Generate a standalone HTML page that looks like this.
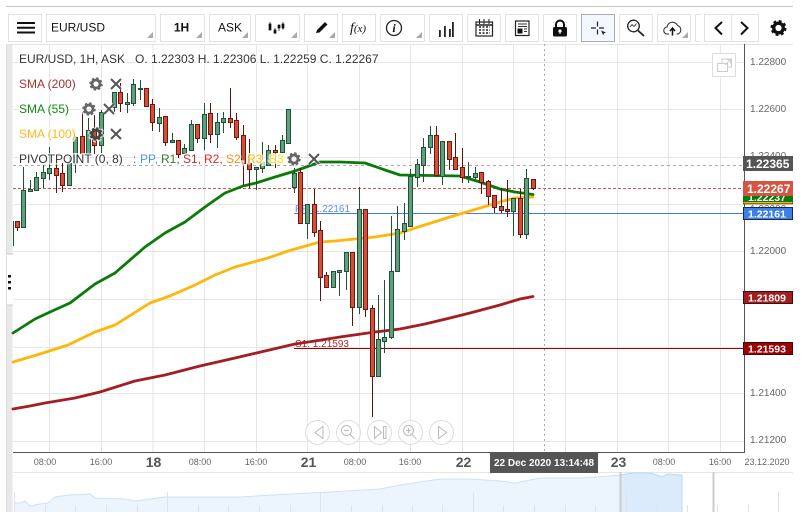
<!DOCTYPE html>
<html><head><meta charset="utf-8"><style>
html,body{margin:0;padding:0;background:#fff;width:812px;height:523px;overflow:hidden}
svg{display:block;font-family:"Liberation Sans",sans-serif}
.btn{fill:#fff;stroke:#e2e2e2}
.tri{fill:#aaa}
.ax{font-size:10px;fill:#666}
.tm{font-size:9px;fill:#666;text-anchor:middle}
.dy{font-size:14px;font-weight:bold;fill:#555;text-anchor:middle}
.lg{font-size:12px;paint-order:stroke;stroke:#fff;stroke-width:3px;stroke-opacity:.75}
.tag{fill:#fff;font-size:10.5px;font-weight:bold}
.nv{fill:#fff;fill-opacity:.6;stroke:#ddd}
.ni{fill:none;stroke:#bbb}
</style></head><body>
<svg width="812" height="523" viewBox="0 0 812 523" xmlns="http://www.w3.org/2000/svg">
<defs>
<g id="gear"><circle r="4" fill="none" stroke="currentColor" stroke-width="2.8"/><circle r="5.6" fill="none" stroke="currentColor" stroke-width="2.2" stroke-dasharray="2.3 2.1"/></g>
<g id="x"><path d="M-5-5L5 5M5-5L-5 5" stroke="#fff" stroke-width="4" stroke-opacity=".6" fill="none"/><path d="M-5-5L5 5M5-5L-5 5" stroke="#555" stroke-width="2" fill="none"/></g>
</defs>
<rect width="812" height="523" fill="#fff"/>
<rect x="6" y="6" width="787" height="1" fill="#c4c4c4"/>
<!-- left rail -->
<rect x="6" y="44" width="1" height="468" fill="#ddd"/>
<rect x="7" y="44" width="5.5" height="468" fill="#e8e8e8"/>
<rect x="7" y="254" width="5.5" height="51" fill="#fff"/>
<path d="M7 254h6M7 305h6" stroke="#ccc"/>
<path d="M8 275h3v2.500h-3zM8 281h3v2.500h-3zM8 287h3v2.500h-3z" fill="#111"/>
<!-- grid -->
<path d="M13 62.500H744M13 109.500H744M13 157.500H744M13 204.500H744M13 251.500H744M13 299.500H744M13 347.500H744M13 393.500H744M13 441.500H744M49.500 44V452M101.500 44V452M153 44V452M204.500 44V452M256.500 44V452M307.500 44V452M359.500 44V452M410.500 44V452M462.500 44V452M513.500 44V452M565.500 44V452M617.500 44V452M668.500 44V452M720.500 44V452" stroke="#e6e6e6" fill="none"/>
<rect x="6" y="44" width="787" height="1" fill="#e4e4e4"/>
<path d="M544.500 44V452" stroke="#aaa" stroke-dasharray="2 3" fill="none"/>
<path d="M13 165.500H744" stroke="#aaa" stroke-dasharray="3 3" fill="none"/>
<path d="M13 188.500H744" stroke="#d9503f" stroke-dasharray="3 2" fill="none"/>
<path d="M294 213.500H744" stroke="#3f7fdc" fill="none"/>
<path d="M294 348.500H744" stroke="#a00000" fill="none"/>
<text x="295" y="212" font-size="10" fill="#5a93e6">PP: 1.22161</text>
<text x="295" y="347" font-size="10" fill="#b02525">S1: 1.21593</text>
<!-- moving averages -->
<g fill="none" stroke-width="2.800" stroke-linejoin="round" stroke-linecap="round">
<path stroke="#a31d22" d="M13 409L30 406L45 403L75 398L100 392L135 381L165 375L200 366L235 358L265 351L295 344L315 341L340 337L375 332L400 329L425 324L450 318L470 313L500 305L520 299L533 296.500"/>
<path stroke="#ffb60a" d="M13 362L40 354L68 345L95 332L115 325L150 303L170 296L195 285L215 275L235 267L268 258L288 251L320 242L335 241L375 237L400 233L415 228L450 217L480 208L500 202L515 198L533 197"/>
<path stroke="#0b7a0b" d="M13 333L35 319L50 312L70 303L95 284L115 273L145 247L165 233L185 222L205 207L225 193L243 186L256 183L275 177L295 171L320 162L340 162L365 163L385 170L400 175L460 176L480 182L500 189L515 192L533 194.500"/>
</g>
<!-- candles: wicks -->
<path fill="none" stroke="#1e5236" d="M13.500 221V246M23.500 167V227M30.500 180V191M36.500 172V190M43.500 165V188M49.500 147V180M69.500 157V185M75.500 136V173M88.500 118V153M101.500 110V153M114.500 92V112M127.500 93V113M133.500 79V106M140.500 80V100M159.500 108V132M172.500 133V142M184.500 144V153M191.500 120V150M204.500 103V150M217.500 113V148M223.500 112V133M256.500 168V190M262.500 142V173M268.500 145V165M282.500 135V152M288.500 109V143M294.500 168V193M307.500 204V239M333.500 271V287M339.500 270V296M346.500 252V290M359.500 187V314M378.500 295V376M384.500 280V353M391.500 216V339M397.500 206V271M404.500 203V240M410.500 169V227M417.500 159V187M423.500 138V182M430.500 126V154M442.500 141V185M468.500 162V183M475.500 167V180M513.500 198V236M526.500 169V239"/>
<path fill="none" stroke="#5e1208" d="M17.500 221V231M56.500 160V193M62.500 163V192M82.500 112V158M94.500 115V154M120.500 83V112M146.500 88V107M152.500 99V131M165.500 116V146M178.500 140V158M197.500 124V143M210.500 103V143M230.500 88V128M236.500 113V140M243.500 125V185M249.500 139V188M275.500 145V168M300.500 168V223M314.500 189V237M320.500 221V301M326.500 272V287M352.500 252V326M365.500 209V317M372.500 305V417M436.500 126V177M449.500 141V170M455.500 133V170M462.500 148V183M481.500 172V194M488.500 180V205M494.500 195V213M501.500 188V213M507.500 180V217M520.500 189V238M533.500 179V190"/>
<!-- candles: bodies -->
<g transform="translate(0 .5)">
<path fill="#5f9f7b" stroke="#1e5236" d="M21.500 190h4V227h-4zM28.500 189h4V191h-4zM34.500 177h4V190h-4zM41.500 172h4V178h-4zM47.500 168h4V173h-4zM67.500 163h4V185h-4zM73.500 137h4V163h-4zM86.500 130h4V153h-4zM99.500 112h4V145h-4zM112.500 92h4V107h-4zM125.500 102h4V104h-4zM131.500 84h4V103h-4zM138.500 88h4V89h-4zM157.500 117h4V123h-4zM170.500 140h4V142h-4zM182.500 148h4V153h-4zM189.500 124h4V150h-4zM202.500 114h4V138h-4zM215.500 122h4V134h-4zM221.500 118h4V122h-4zM254.500 167h4V169h-4zM260.500 163h4V168h-4zM266.500 150h4V165h-4zM280.500 140h4V152h-4zM286.500 109h4V143h-4zM292.500 173h4V187h-4zM305.500 204h4V223h-4zM331.500 271h4V287h-4zM337.500 270h4V272h-4zM344.500 252h4V271h-4zM357.500 209h4V307h-4zM376.500 339h4V376h-4zM382.500 337h4V341h-4zM389.500 271h4V337h-4zM395.500 229h4V271h-4zM402.500 223h4V231h-4zM408.500 176h4V226h-4zM415.500 164h4V177h-4zM421.500 147h4V165h-4zM428.500 135h4V147h-4zM440.500 141h4V176h-4zM466.500 176h4V177h-4zM473.500 173h4V177h-4zM511.500 198h4V211h-4zM524.500 178h4V234h-4z"/>
<path fill="#d44e38" stroke="#6a1810" d="M15.500 221h4V227h-4zM54.500 168h4V175h-4zM60.500 173h4V185h-4zM80.500 136h4V153h-4zM92.500 130h4V145h-4zM118.500 92h4V103h-4zM144.500 88h4V106h-4zM150.500 104h4V122h-4zM163.500 116h4V142h-4zM176.500 140h4V154h-4zM195.500 124h4V138h-4zM208.500 113h4V134h-4zM228.500 118h4V122h-4zM234.500 120h4V137h-4zM241.500 135h4V163h-4zM247.500 163h4V169h-4zM273.500 150h4V152h-4zM298.500 172h4V223h-4zM312.500 204h4V232h-4zM318.500 230h4V277h-4zM324.500 275h4V287h-4zM350.500 252h4V307h-4zM363.500 209h4V309h-4zM370.500 308h4V376h-4zM434.500 135h4V175h-4zM447.500 141h4V159h-4zM453.500 157h4V169h-4zM460.500 167h4V177h-4zM479.500 172h4V182h-4zM486.500 181h4V196h-4zM492.500 195h4V207h-4zM499.500 206h4V210h-4zM505.500 209h4V211h-4zM518.500 198h4V234h-4zM531.500 179h4V188h-4z"/>
</g>
<!-- legend -->
<text x="19" y="63" class="lg" fill="#333">EUR/USD, 1H, ASK</text>
<text x="135" y="63" class="lg" fill="#333">O. 1.22303 H. 1.22306 L. 1.22259 C. 1.22267</text>
<text x="19" y="88" class="lg" fill="#a83232">SMA (200)</text>
<text x="19" y="113" class="lg" fill="#118811">SMA (55)</text>
<text x="19" y="138" class="lg" fill="#ffb81c">SMA (100)</text>
<text x="19" y="163" class="lg" fill="#333">PIVOTPOINT (0, 8)</text>
<text x="133" y="163" class="lg" fill="#666">:</text>
<text x="140" y="163" class="lg" fill="#4a90f0">PP,</text>
<text x="161" y="163" class="lg" fill="#2e7d2e">R1,</text>
<text x="183" y="163" class="lg" fill="#c12e2e">S1,</text>
<text x="204" y="163" class="lg" fill="#ee2222">R2,</text>
<text x="226" y="163" class="lg" fill="#ff8c1a">S2,</text>
<text x="247" y="163" class="lg" fill="#ffb400">R3,</text>
<text x="269" y="163" class="lg" fill="#f5e800">S3</text>
<g color="#fff" opacity=".6" transform="translate(96 84) scale(1.250)"><use href="#gear"/></g>
<g color="#666" transform="translate(96 84)"><use href="#gear"/></g>
<use href="#x" x="116" y="84"/>
<g color="#fff" opacity=".6" transform="translate(89 109) scale(1.250)"><use href="#gear"/></g>
<g color="#666" transform="translate(89 109)"><use href="#gear"/></g>
<use href="#x" x="109" y="109"/>
<g color="#fff" opacity=".7" transform="translate(96 134) scale(1.250)"><use href="#gear"/></g>
<g color="#444" transform="translate(96 134)"><use href="#gear"/></g>
<use href="#x" x="116" y="134"/>
<g color="#fff" opacity=".6" transform="translate(294 159) scale(1.250)"><use href="#gear"/></g>
<g color="#666" transform="translate(294 159)"><use href="#gear"/></g>
<use href="#x" x="314" y="159"/>
<!-- popout -->
<rect x="712.500" y="53.500" width="23" height="23" fill="#fff" stroke="#ddd"/>
<path d="M717.500 63.500h10v8h-10zM722 63.500v-4.500h9.500v8h-4" fill="none" stroke="#ccc"/>
<path d="M725 65l5-5M726.500 59.500h4v4" fill="none" stroke="#ccc"/>
<!-- chart nav buttons -->
<g class="nv"><circle cx="317.500" cy="432.500" r="12"/><circle cx="348.500" cy="432.500" r="12"/><circle cx="379.500" cy="432.500" r="12"/><circle cx="410.500" cy="432.500" r="12"/><circle cx="441.500" cy="432.500" r="12"/></g>
<g class="ni">
<path d="M323 426.500v12l-8-6z"/>
<circle cx="346.500" cy="430.500" r="5"/><path d="M344 430.500h5M350 434.500l4.500 4.500"/>
<path d="M374.500 426.500v12l7-6zM383.500 426.500h2.500v12h-2.500z"/>
<circle cx="408.500" cy="430.500" r="5"/><path d="M406 430.500h5M408.500 428v5M412 434.500l4.500 4.500"/>
<path d="M438.500 426.500v12l8-6z"/>
</g>
<!-- axis -->
<rect x="744" y="44" width="1" height="409" fill="#555"/>
<rect x="13" y="452" width="732" height="1" fill="#555"/>
<g class="ax">
<text x="750" y="65">1.22800</text>
<text x="750" y="112">1.22600</text>
<text x="750" y="159">1.22400</text>
<text x="750" y="212">1.22200</text>
<text x="750" y="254">1.22000</text>
<text x="750" y="396">1.21400</text>
<text x="750" y="443">1.21200</text>
</g>
<!-- price tags -->
<rect x="743" y="156" width="50" height="15" fill="#555"/>
<text x="746" y="168" fill="#fff" font-size="12" font-weight="bold">1.22365</text>
<rect x="743" y="196" width="50" height="8" fill="#0b7a0b"/>
<text x="748" y="201" class="tag">1.22237</text>
<rect x="743.500" y="202" width="49" height="1.500" fill="#ffb60a"/>
<rect x="743" y="203.500" width="50" height=".8" fill="#222"/>
<rect x="743" y="181" width="50" height="15" fill="#d55542"/>
<text x="747" y="193" fill="#fff" font-size="12" font-weight="bold">1.22267</text>
<rect x="743.500" y="207.500" width="49" height="12" fill="#3a80e8" stroke="#1a2a40"/>
<text x="748" y="217.500" class="tag">1.22161</text>
<rect x="743.500" y="291.500" width="49" height="12" fill="#a31d1d" stroke="#3a1010"/>
<text x="748" y="301.500" class="tag">1.21809</text>
<rect x="743.500" y="342.500" width="49" height="12" fill="#a00000" stroke="#301010"/>
<text x="748" y="352.500" class="tag">1.21593</text>
<!-- time axis -->
<g class="tm">
<text x="45" y="465">08:00</text><text x="101" y="465">16:00</text>
<text x="200" y="465">08:00</text><text x="256" y="465">16:00</text>
<text x="355" y="465">08:00</text><text x="410" y="465">16:00</text>
<text x="664" y="465">08:00</text><text x="720" y="465">16:00</text>
<text x="767" y="465">23.12.2020</text>
</g>
<g class="dy">
<text x="153.500" y="467">18</text><text x="308.500" y="467">21</text><text x="463.500" y="467">22</text><text x="618.500" y="467">23</text>
</g>
<rect x="490" y="452" width="108" height="21" fill="#555"/>
<text x="544" y="466" fill="#fff" font-size="10" font-weight="bold" text-anchor="middle">22 Dec 2020 13:14:48</text>
<!-- navigator -->
<rect x="13" y="472" width="780" height="1" fill="#e6e6e6"/>
<rect x="490" y="472" width="108" height="1" fill="#555"/>
<path fill="#ecf4fd" stroke="none" d="M14 503L20 503L25 501L30 506L40 504L48 503L55 497L70 495L90 494L95 498L125 499L135 501L165 497L200 497L240 497L290 494L330 492L380 489L400 485L420 482L440 479L470 479L500 481L515 483L540 478L580 478L610 476L620 475V512H14Z"/>
<path fill="#dcebfc" d="M620 475L632 473L650 473L660 476L662 477L668 474L680 475L682 475V512H620Z"/>
<path fill="none" stroke="#cfe1f8" d="M14 503L20 503L25 501L30 506L40 504L48 503L55 497L70 495L90 494L95 498L125 499L135 501L165 497L200 497L240 497L290 494L330 492L380 489L400 485L420 482L440 479L470 479L500 481L515 483L540 478L580 478L610 476L620 475"/>
<path fill="none" stroke="#bcd8f8" d="M620 475L632 473L650 473L660 476L662 477L668 474L680 475L682 475V512"/>
<path fill="none" stroke="#dfe3e8" d="M45.500 505V512M75.500 505V512M106.500 505V512M137.500 505V512M198.500 505V512M228.500 505V512M259.500 505V512M290.500 505V512M351.500 505V512M382.500 505V512M412.500 505V512M442.500 505V512M503.500 505V512M534.500 505V512M565.500 505V512M595.500 505V512M657.500 505V512M687.500 505V512M717.500 505V512M748.500 505V512M14.500 492V512M167.500 492V512M320.500 492V512M473.500 492V512M626.500 492V512M778.500 492V512"/>
<rect x="619.500" y="472" width="2" height="40" fill="#ccc"/>
<rect x="712.500" y="472" width="2" height="40" fill="#ccc"/>
<!-- toolbar -->
<g class="btn">
<rect x="8.500" y="14.500" width="33" height="27"/>
<rect x="46.500" y="14.500" width="109" height="27"/>
<rect x="160.500" y="14.500" width="44" height="27"/>
<rect x="209.500" y="14.500" width="41" height="27"/>
<rect x="255.500" y="14.500" width="44" height="27"/>
<rect x="304.500" y="14.500" width="33" height="27"/>
<rect x="342.500" y="14.500" width="33" height="27"/>
<rect x="380.500" y="14.500" width="44" height="27"/>
<rect x="429.500" y="14.500" width="33" height="27"/>
<rect x="467.500" y="14.500" width="33" height="27"/>
<rect x="505.500" y="14.500" width="33" height="27"/>
<rect x="543.500" y="14.500" width="33" height="27"/>
<rect x="581.500" y="14.500" width="33" height="27" style="fill:#f4f8fe;stroke:#a9aebb"/>
<rect x="619.500" y="14.500" width="33" height="27"/>
<rect x="657.500" y="14.500" width="33" height="27"/>
<path d="M701 14.500h-5.500v27h5.500" fill="none"/>
<rect x="704.500" y="14.500" width="27" height="27"/>
<rect x="731.500" y="14.500" width="27" height="27"/>
</g>
<path class="tri" d="M153 32v6h-6zM202 32v6h-6zM248 32v6h-6zM297 32v6h-6zM335 32v6h-6zM422 32v6h-6zM688 32v6h-6z"/>
<path d="M17 22h18v2h-18zM17 26.800h18v2h-18zM17 31.500h18v2h-18z" fill="#111"/>
<text x="51" y="31.500" font-size="12" fill="#111">EUR/USD</text>
<text x="181.500" y="31.500" font-size="12" font-weight="bold" fill="#111" text-anchor="middle">1H</text>
<text x="230" y="31.500" font-size="12" fill="#111" text-anchor="middle">ASK</text>
<path d="M270 22v6.500M269 24h2v6h-2zM275 28v6M274 30h2v3h-2zM279 25v6M278 25h2v3h-2zM283 22v8M282 24h2v4h-2z" stroke="#111" stroke-width=".7" fill="#111"/>
<path d="M316 33l1-3 8-8 2.500 2.500-8 8z" fill="#111"/>
<text x="350" y="32" font-family="Liberation Serif" font-style="italic" font-size="14" fill="#111">f<tspan font-size="11">(x)</tspan></text>
<circle cx="394" cy="28" r="7.500" fill="none" stroke="#222" stroke-width="1.300"/>
<text x="394" y="32" font-family="Liberation Serif" font-style="italic" font-weight="bold" font-size="12" fill="#111" text-anchor="middle">i</text>
<path d="M439 30h1.800v7h-1.800zM444 26h1.800v11h-1.800zM449 29h1.800v8h-1.800zM452 22h1.800v15h-1.800z" fill="#222"/>
<rect x="476" y="22" width="16.500" height="14" fill="#fff" stroke="#222" stroke-width="1.200"/>
<path d="M476 25h16.500" stroke="#222" stroke-width="1.500"/>
<path d="M479.500 19v5M484 19v5M489 19v5" stroke="#222"/>
<path d="M479 27h11M479 30h11M479 33h11" stroke="#222" stroke-width="1.500" stroke-dasharray="2 1.500"/>
<rect x="515.500" y="21" width="13.500" height="14.500" fill="#fff" stroke="#222" stroke-width="1.200"/>
<path d="M518 24h9M518 26.500h9M524 29h3M524 31.500h3" stroke="#333"/>
<rect x="517.500" y="28.500" width="5" height="5" fill="#111"/>
<path d="M556 28v-3.500a4 4 0 0 1 8 0V28" fill="none" stroke="#111" stroke-width="2"/>
<rect x="553" y="27" width="14" height="9.500" rx="1.500" fill="#111"/>
<circle cx="560" cy="31" r="1.600" fill="#fff"/>
<path d="M559.500 31h1v3h-1z" fill="#fff"/>
<path d="M597.500 21.500v5M597.500 29.500v5M591 28h5M599 28h5" stroke="#222" stroke-width="1.200"/>
<path d="M601 30.500l5 2-2 .8-.8 2z" fill="#222"/>
<circle cx="633.500" cy="26" r="5.800" fill="none" stroke="#222" stroke-width="1.300"/>
<path d="M630 27l2-2.500 2 2 2.500-3" fill="none" stroke="#444"/>
<path d="M638 30.500l6 5.500" stroke="#222" stroke-width="1.800"/>
<path d="M669 34h-1.500a3.500 3.500 0 0 1-.5-7 5.500 5.500 0 0 1 10.500-1.500 4.500 4.500 0 0 1 .5 8.500h-1.500" fill="none" stroke="#333" stroke-width="1.100"/>
<path d="M672.500 35.500v-7M670 31l2.500-3 2.500 3" fill="none" stroke="#111" stroke-width="1.500"/>
<path d="M722 22l-6.500 6 6.500 6.500" fill="none" stroke="#111" stroke-width="2"/>
<path d="M741 22l6.500 6-6.500 6.500" fill="none" stroke="#111" stroke-width="2"/>
<g color="#111" transform="translate(778.500 28) scale(1.200)"><use href="#gear"/></g>
</svg>
</body></html>
